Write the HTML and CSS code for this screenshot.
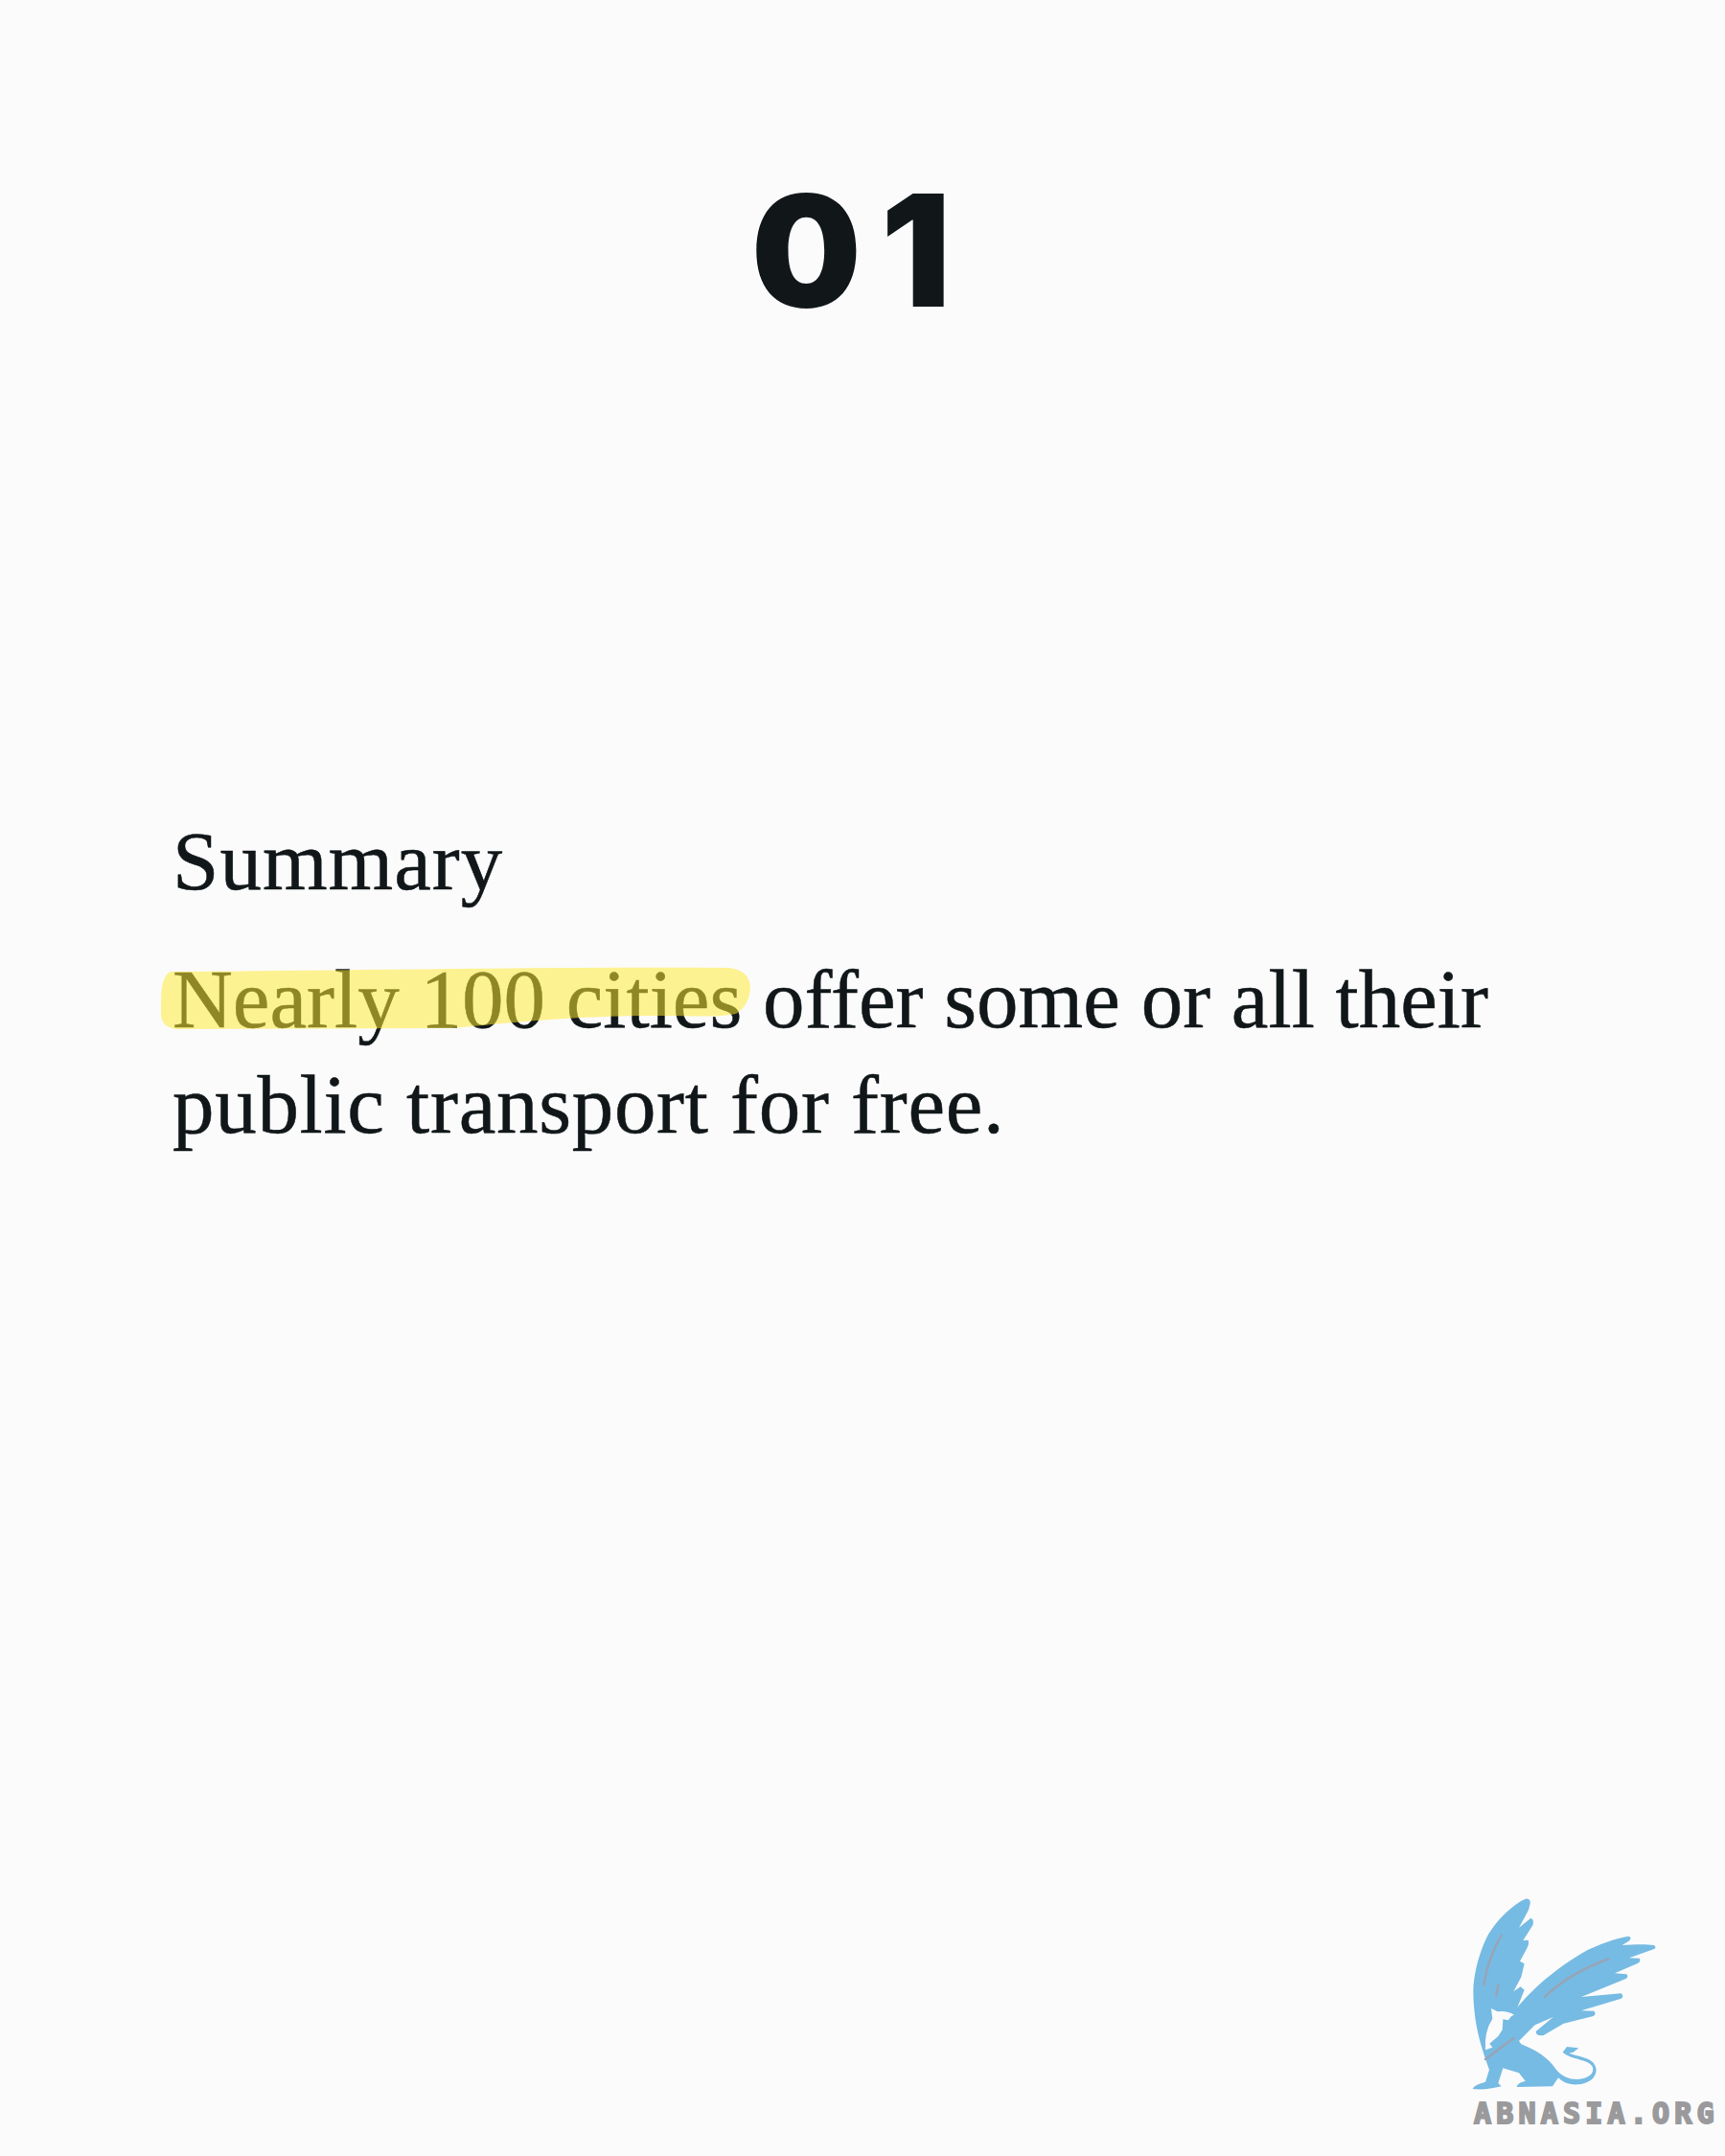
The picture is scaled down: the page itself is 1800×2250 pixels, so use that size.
FILE: index.html
```html
<!DOCTYPE html>
<html lang="en">
<head>
<meta charset="utf-8">
<title>Summary</title>
<link rel="stylesheet" href="styles.css">
</head>
<body>
<main class="page">
  <h1 class="number">01</h1>
  <section class="summary">
    <h2 class="label">Summary</h2>
    <p class="text">Nearly 100 cities offer some or all their<br><span class="line-two">public transport for free.</span></p>
    <svg class="marker" viewBox="160 1000 640 90" aria-hidden="true">
      <path d="M168 1045 Q168 1018 178 1014 C350 1013 560 1009 760 1010 Q783 1012 783 1032 Q781 1050 768 1058 C750 1062 720 1060 690 1060 C640 1060 600 1062 560 1065 L470 1073 L185 1074 Q170 1073 168 1060 Z"/>
    </svg>
  </section>
  <div class="brand">
    <svg class="griffin" viewBox="0 0 900 720" aria-hidden="true">
      <path class="blue" d="M140 565 C120 500 112 440 112 380 C114 320 135 250 160 205 C190 155 240 110 275 95 Q292 93 290 110 L285 130 L255 185 L292 155 Q304 160 298 178 L268 225 L284 224 Q288 235 280 250 L258 290 L272 298 L262 340 L238 385 L260 370 L272 380 L250 435 C290 385 370 310 470 255 C520 232 570 215 600 212 Q610 218 598 228 L578 240 C610 238 650 236 678 240 Q688 248 676 253 L600 280 L632 281 Q638 290 628 296 L555 328 L592 331 Q600 340 588 346 L450 402 L575 391 Q585 400 575 407 L450 445 L490 446 Q498 456 488 462 L395 485 L332 522 Q308 526 308 510 L362 465 L305 490 L255 540 L262 550 C310 570 345 590 372 630 C395 660 440 668 470 652 Q492 640 485 620 C470 595 420 600 392 575 L405 558 L442 562 L425 575 L412 578 C440 590 495 590 497 630 Q495 665 450 675 C410 680 392 668 378 655 L360 682 L248 684 Q248 672 275 665 L255 640 L205 625 L190 672 L200 682 Q150 695 110 690 Q112 678 150 668 L162 630 L148 590 Z"/>
      <path class="white" d="M168 438 L188 448 Q215 443 240 458 Q228 462 222 475 L205 472 L203 505 L190 525 L163 548 L172 560 L150 568 Q146 510 172 470 Z"/>
      <path class="shade" d="M200 210 C172 255 155 305 145 365 M190 365 L184 398 M335 402 C390 350 460 310 535 283 M150 597 L240 530"/>
    </svg>
    <span class="brand-name">ABNASIA.ORG</span>
  </div>
</main>
</body>
</html>
```

FILE: styles.css
```css
* { box-sizing: border-box; }
html, body { margin: 0; padding: 0; }
body { background: #fbfbfc; }
.page {
  position: relative;
  width: 1800px;
  height: 2250px;
  padding-top: 166px;
  color: #111719;
  overflow: hidden;
}
.number {
  margin: 0;
  padding-right: 4px;
  text-align: center;
  font: 900 162px/190px Inter, "Liberation Sans", sans-serif;
  letter-spacing: 20px;
}
.summary {
  position: relative;
  margin-top: 488px;
  padding: 0 180px;
  font-family: "Liberation Serif", "Times New Roman", serif;
  font-size: 87px;
  line-height: 110px;
  -webkit-text-stroke: .5px #111719;
}
.label {
  margin: 0 0 34px;
  font: inherit;
  letter-spacing: 1px;
}
.text { margin: 0; }
.line-two { letter-spacing: .7px; }
.marker {
  position: absolute;
  left: 160px;
  top: 156px;
  width: 640px;
  height: 90px;
}
.marker path { fill: #ffeb31; fill-opacity: .53; }
.brand {
  position: absolute;
  right: 0;
  bottom: 32px;
  width: 262px;
}
.griffin {
  display: block;
  width: 300px;
  height: 240px;
  margin: 0 0 4px -38px;
}
.blue { fill: #76bbe3; }
.white { fill: #fbfbfc; }
.shade { fill: none; stroke: #9aa3b4; stroke-width: 7; stroke-linecap: round; }
.brand-name {
  display: block;
  font: 700 30px/24px "DejaVu Sans Mono", monospace;
  letter-spacing: 5.2px;
  color: #9a9a9c;
  -webkit-text-stroke: 2px #9a9a9c;
  white-space: nowrap;
}
```
